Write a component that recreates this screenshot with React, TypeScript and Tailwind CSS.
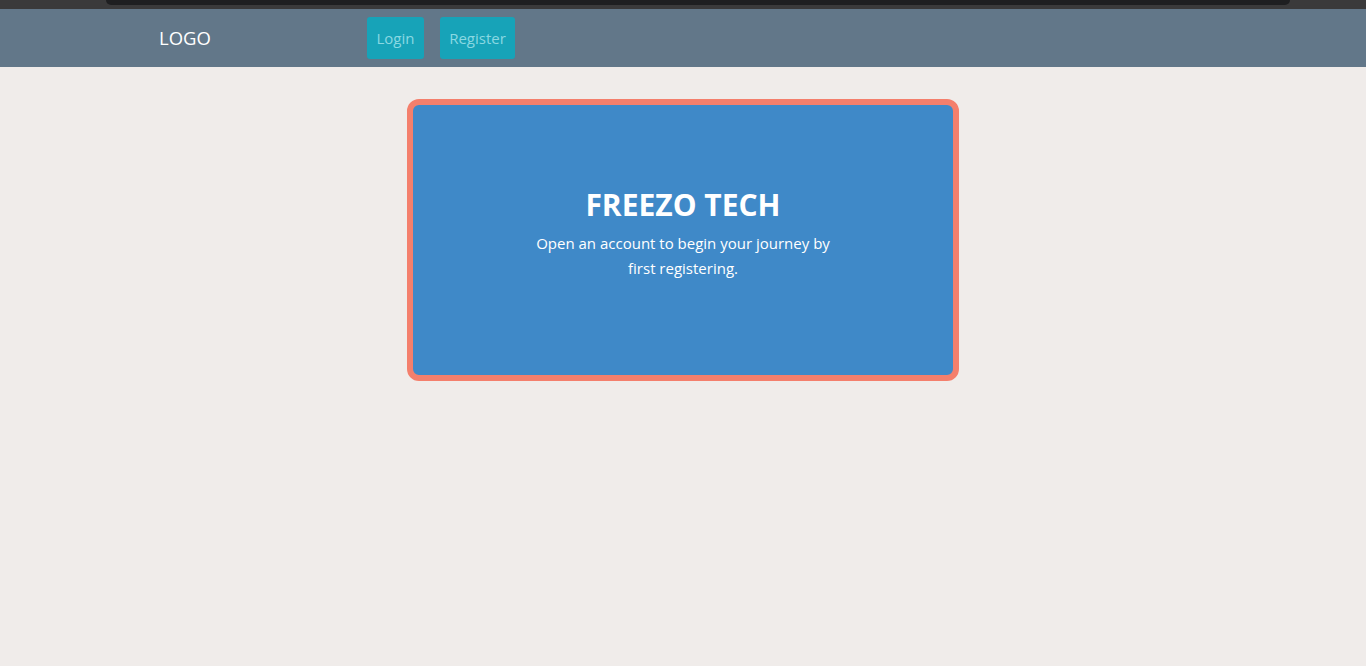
export default function App() {
  return (
    <div className="min-h-[666px] bg-[#f0ecea]" style={{ fontFamily: '"Open Sans", "Noto Sans", sans-serif' }}>
      {/* top strip */}
      <div className="h-[9px] bg-[#3a3a3b] pl-[106px] pr-[76px]">
        <div className="h-[5px] rounded-b-lg bg-[#1e1f21]" />
      </div>

      <nav className="flex h-[58px] items-center bg-[#627789] pl-[159px]">
        <span className="w-[208px] text-[18.5px] text-white">LOGO</span>
        <div className="flex gap-4">
          <button className="h-[42px] w-[57px] rounded-[3px] bg-[#17a3b8] text-[15px] text-[#8ad8e2]">Login</button>
          <button className="h-[42px] w-[75px] rounded-[3px] bg-[#17a3b8] text-[15px] text-[#8ad8e2]">Register</button>
        </div>
      </nav>

      <div className="flex justify-center pt-8">
        <div className="flex h-[282px] w-[552px] flex-col items-center justify-center rounded-[12px] border-[6px] border-[#f47f6c] bg-[#3f89c8] pb-[14px] text-center text-white">
          <h1 className="mb-[6px] text-[30px] font-bold leading-[40px]">FREEZO TECH</h1>
          <p className="w-[310px] text-[15px] leading-[25px]">
            Open an account to begin your journey by first registering.
          </p>
        </div>
      </div>
    </div>
  )
}
